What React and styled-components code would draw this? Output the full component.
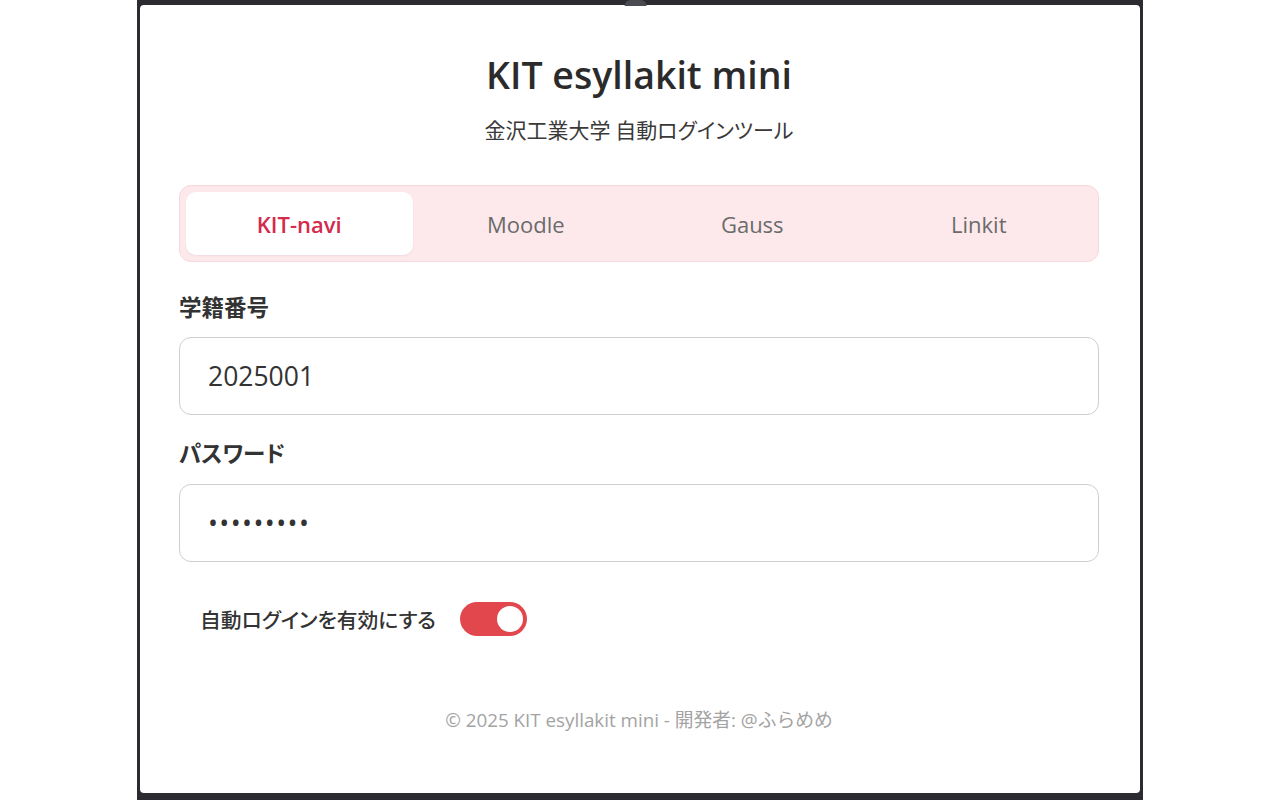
import React from "react";
import styled, { createGlobalStyle } from "styled-components";

const Global = createGlobalStyle`
  html, body { margin: 0; padding: 0; background: #ffffff; }
  body { font-family: "Open Sans", "Noto Sans CJK JP", sans-serif; }
  * { box-sizing: border-box; }
`;

const Frame = styled.div`
  width: 1006px;
  height: 800px;
  margin: 0 auto;
  background: #2b2b31;
  padding: 5px 3px 7px 3px;
  position: relative;
`;

const Notch = styled.div`
  position: absolute;
  top: 0;
  left: 50%;
  width: 22px;
  height: 6px;
  transform: translateX(-70%);
  background: #4a4a51;
  border-radius: 10px 10px 0 0;
`;

const Panel = styled.div`
  height: 100%;
  background: #ffffff;
  border-radius: 4px;
  padding: 47px 41px 0 39px;
  display: flex;
  flex-direction: column;
  font-family: "Open Sans", "Noto Sans CJK JP", sans-serif;
`;

const Title = styled.h1`
  margin: 0;
  text-align: center;
  font-size: 37.5px;
  line-height: 46px;
  font-weight: 600;
  color: #2b2b2b;
`;

const Subtitle = styled.p`
  margin: 17px 0 0;
  text-align: center;
  font-size: 21px;
  line-height: 28px;
  color: #3a3a3a;
  font-family: "Noto Sans CJK JP", sans-serif;
  font-feature-settings: "palt";
`;

const Tabs = styled.div`
  margin-top: 42px;
  height: 77px;
  display: grid;
  grid-template-columns: repeat(4, 1fr);
  padding: 6px;
  background: #fde9eb;
  border: 1px solid #f6d9dc;
  border-radius: 12px;
`;

const Tab = styled.div`
  display: flex;
  align-items: center;
  justify-content: center;
  border-radius: 10px;
  font-size: 22px;
  font-weight: ${(p) => (p.$active ? 600 : 400)};
  color: ${(p) => (p.$active ? "#d42a4c" : "#6b6b6b")};
  background: ${(p) => (p.$active ? "#ffffff" : "transparent")};
  box-shadow: ${(p) => (p.$active ? "0 1px 2px rgba(0,0,0,0.06)" : "none")};
`;

const Label = styled.label`
  display: block;
  margin-top: ${(p) => p.$top}px;
  font-size: 22.5px;
  line-height: 28px;
  font-weight: 700;
  color: #333333;
  font-family: "Noto Sans CJK JP", sans-serif;
  font-feature-settings: "palt";
`;

const Input = styled.input`
  display: block;
  width: 100%;
  height: 78px;
  margin-top: ${(p) => p.$top}px;
  padding: 0 28px;
  border: 1px solid #cfcfcf;
  border-radius: 12px;
  background: #ffffff;
  font-family: "Open Sans", sans-serif;
  font-size: 26.5px;
  letter-spacing: ${(p) => (p.type === "password" ? "1.4px" : "0")};
  color: #333333;
  outline: none;
`;

const ToggleRow = styled.div`
  margin-top: 40px;
  padding-left: 21px;
  display: flex;
  align-items: center;
  gap: 24px;
  height: 34px;
`;

const ToggleLabel = styled.span`
  font-size: 20.8px;
  color: #333333;
  font-family: "Noto Sans CJK JP", sans-serif;
  font-feature-settings: "palt";
  font-weight: 500;
`;

const Switch = styled.div`
  width: 67px;
  height: 34px;
  border-radius: 17px;
  background: #e2474e;
  padding: 4px;
  display: flex;
  justify-content: flex-end;
`;

const Knob = styled.div`
  width: 26px;
  height: 26px;
  border-radius: 50%;
  background: #ffffff;
`;

const Footer = styled.footer`
  margin-top: 72px;
  text-align: center;
  font-size: 18.8px;
  line-height: 24px;
  color: #a3a3a3;
  font-family: "Open Sans", "Noto Sans CJK JP", sans-serif;
`;

export default function App() {
  const tabs = ["KIT-navi", "Moodle", "Gauss", "Linkit"];
  return (
    <>
      <Global />
      <Frame>
        <Notch />
        <Panel>
          <Title>KIT esyllakit mini</Title>
          <Subtitle>金沢工業大学 自動ログインツール</Subtitle>
          <Tabs>
            {tabs.map((t, i) => (
              <Tab key={t} $active={i === 0}>
                {t}
              </Tab>
            ))}
          </Tabs>
          <Label $top={30}>学籍番号</Label>
          <Input $top={17} type="text" defaultValue="2025001" readOnly />
          <Label $top={23}>パスワード</Label>
          <Input $top={18} type="password" defaultValue="123456789" readOnly />
          <ToggleRow>
            <ToggleLabel>自動ログインを有効にする</ToggleLabel>
            <Switch>
              <Knob />
            </Switch>
          </ToggleRow>
          <Footer>© 2025 KIT esyllakit mini - 開発者: @ふらめめ</Footer>
        </Panel>
      </Frame>
    </>
  );
}
